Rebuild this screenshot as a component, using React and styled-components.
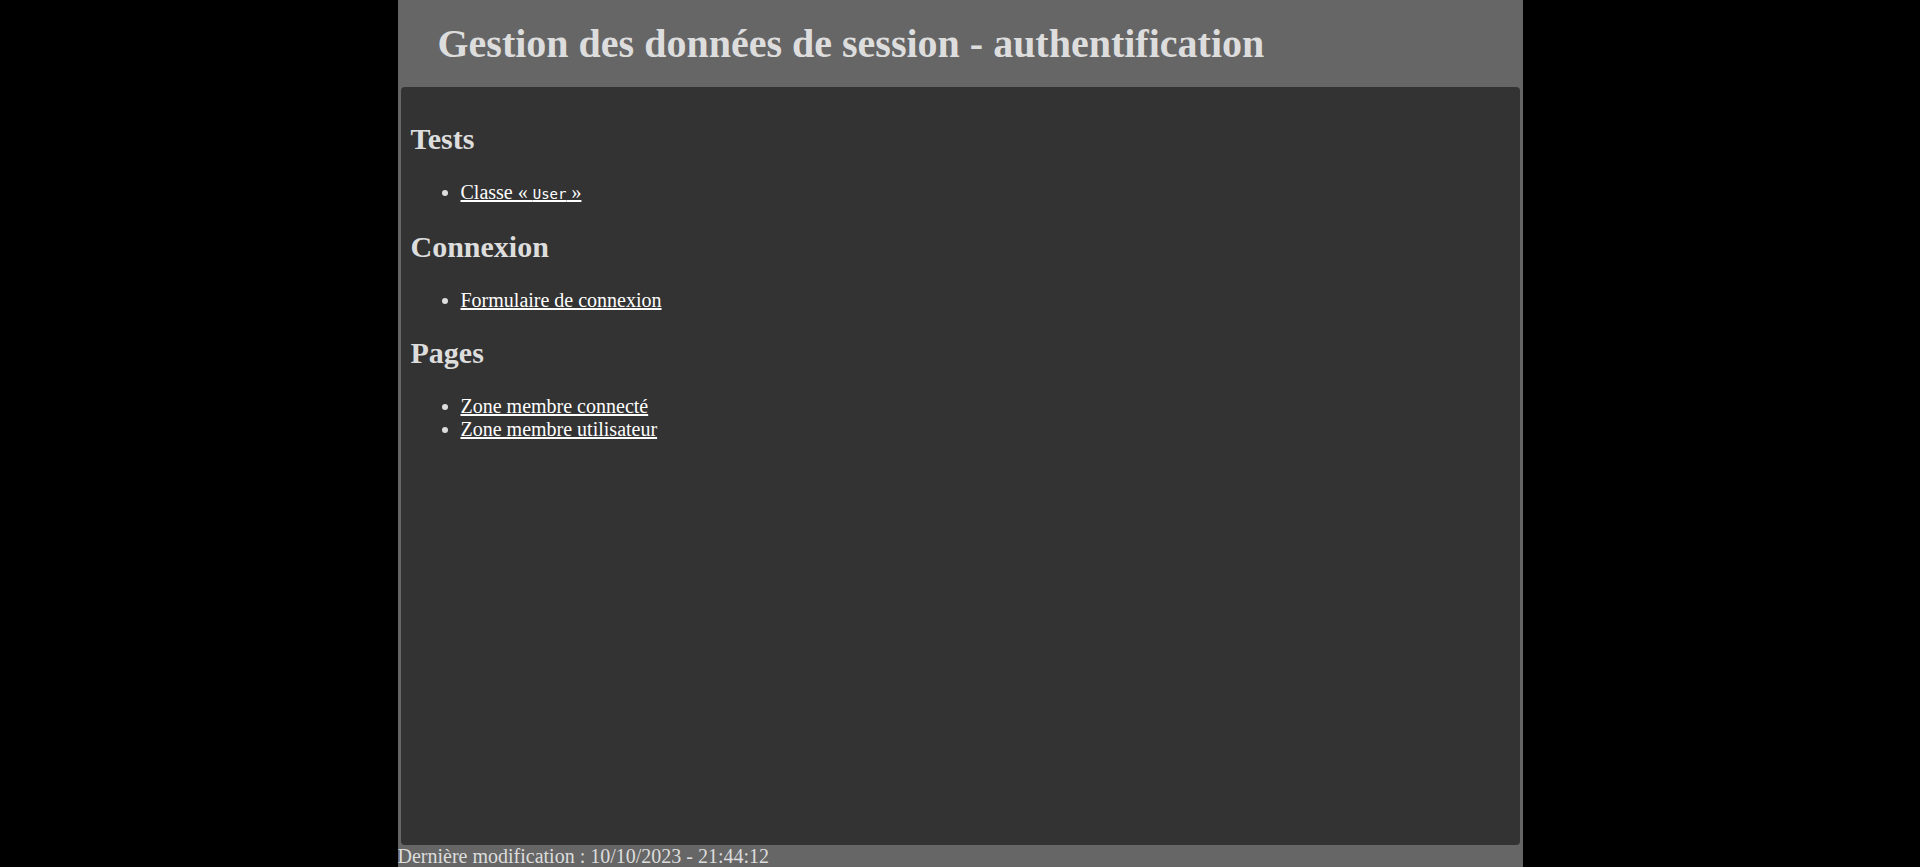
import styled, { createGlobalStyle } from "styled-components";

const GlobalStyle = createGlobalStyle`
  html, body {
    margin: 0;
    padding: 0;
    background: #000;
    height: 100%;
  }
  body {
    font-family: "Liberation Serif", "Times New Roman", serif;
    font-size: 20px;
    color: #ddd;
    overflow: hidden;
  }
`;

// Centered grey column
const Page = styled.div`
  width: 1125px;
  margin: 0 auto;
  background: #666;
  min-height: 867px;
`;

const Header = styled.header`
  padding: 21px 40px 20px;

  h1 {
    margin: 0;
    font-size: 40px;
    font-weight: bold;
    line-height: 46px;
    color: #ddd;
  }
`;

// Dark content panel
const Panel = styled.main`
  margin: 0 3px;
  height: 736px;
  padding: 11px 10px;
  background: #333;
  border-radius: 4px;
`;

const SectionTitle = styled.h2`
  margin: 24px 0 25px;
  font-size: 30px;
  line-height: 34px;
  font-weight: bold;
  color: #ddd;
`;

const LinkList = styled.ul`
  margin: 25px 0 24px;
  padding-left: 50px;
  line-height: 23px;
  color: #ddd;
`;

const Link = styled.a`
  color: #fff;
  text-decoration: underline;
`;

const Code = styled.code`
  font-family: "DejaVu Sans Mono", "Liberation Mono", monospace;
  font-size: 14px;
`;

const Footer = styled.footer`
  line-height: 23px;
  color: #ddd;
`;

const sections = [
  {
    title: "Tests",
    links: [
      <>
        Classe « <Code>User</Code> »
      </>,
    ],
  },
  { title: "Connexion", links: ["Formulaire de connexion"] },
  { title: "Pages", links: ["Zone membre connecté", "Zone membre utilisateur"] },
];

export default function App() {
  return (
    <>
      <GlobalStyle />
      <Page>
        <Header>
          <h1>Gestion des données de session - authentification</h1>
        </Header>
        <Panel>
          {sections.map((s) => (
            <section key={s.title}>
              <SectionTitle>{s.title}</SectionTitle>
              <LinkList>
                {s.links.map((l, i) => (
                  <li key={i}>
                    <Link href="#">{l}</Link>
                  </li>
                ))}
              </LinkList>
            </section>
          ))}
        </Panel>
        <Footer>Dernière modification : 10/10/2023 - 21:44:12</Footer>
      </Page>
    </>
  );
}
